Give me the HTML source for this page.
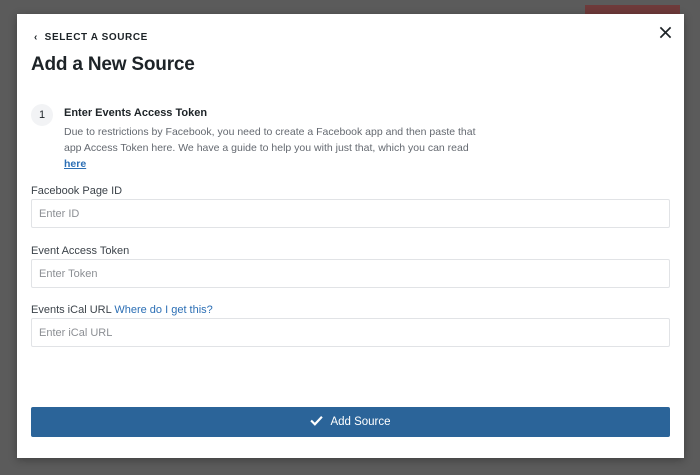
<!DOCTYPE html>
<html><head><style>
*{box-sizing:border-box;margin:0;padding:0}
body{width:700px;height:475px;background:#5b5b5b;position:relative;overflow:hidden;font-family:"Liberation Sans",Arial,sans-serif;color:#1d2327}
.bg-btn{position:absolute;left:585px;top:5px;width:95px;height:10px;background:#6e3a3a}
.modal{position:absolute;left:17px;top:14px;width:667px;height:444px;background:#fff;box-shadow:0 2px 8px rgba(0,0,0,.3)}
.back{position:absolute;left:17px;top:18px;font-size:10px;font-weight:bold;letter-spacing:.6px;color:#1d2327}
.close{position:absolute;left:642px;top:12px;width:13px;height:13px}
h1{position:absolute;left:14px;top:40px;font-size:19px;font-weight:bold;letter-spacing:-.2px}
.num{position:absolute;left:14px;top:90px;width:22px;height:22px;border-radius:50%;background:#f2f3f5;font-size:11px;text-align:center;line-height:22px}
.st{position:absolute;left:47px;top:93px;font-size:11px;font-weight:bold}
.desc{position:absolute;left:47px;top:110px;font-size:10.5px;line-height:16px;color:#646970;width:415px}
.desc a{color:#2c6fb5;font-weight:bold;text-decoration:underline}
.lbl{position:absolute;left:14px;font-size:11px;color:#3c434a}
.lbl a{color:#2c6fb5;text-decoration:none}
.inp{position:absolute;left:14px;width:639px;height:29px;border:1px solid #e1e3e6;border-radius:2px;font-size:11px;color:#8c8f94;padding-left:7px;line-height:29px}
.btn{position:absolute;left:14px;top:393px;width:639px;height:30px;background:#2b6499;border-radius:2px;color:#fff;font-size:11.5px;text-align:center;line-height:30px}
</style></head><body>
<div class="bg-btn"></div>
<div class="modal">
<div class="back">&#8249;&nbsp;&nbsp;SELECT A SOURCE</div>
<svg class="close" viewBox="0 0 14 14"><path d="M1.5 1.5L12.5 12.5M12.5 1.5L1.5 12.5" stroke="#1d2327" stroke-width="1.8"/></svg>
<h1>Add a New Source</h1>
<div class="num">1</div>
<div class="st">Enter Events Access Token</div>
<div class="desc">Due to restrictions by Facebook, you need to create a Facebook app and then paste that app Access Token here. We have a guide to help you with just that, which you can read <a>here</a></div>
<div class="lbl" style="top:171px">Facebook Page ID</div>
<div class="inp" style="top:185px">Enter ID</div>
<div class="lbl" style="top:231px">Event Access Token</div>
<div class="inp" style="top:245px">Enter Token</div>
<div class="lbl" style="top:290px">Events iCal URL <a>Where do I get this?</a></div>
<div class="inp" style="top:304px">Enter iCal URL</div>
<div class="btn"><svg width="13" height="11" viewBox="0 0 12 10" style="vertical-align:-1px;margin-right:7px"><path d="M1 5L4.5 8.5L11 1.5" stroke="#fff" stroke-width="2" fill="none"/></svg>Add Source</div>
</div>
</body></html>
